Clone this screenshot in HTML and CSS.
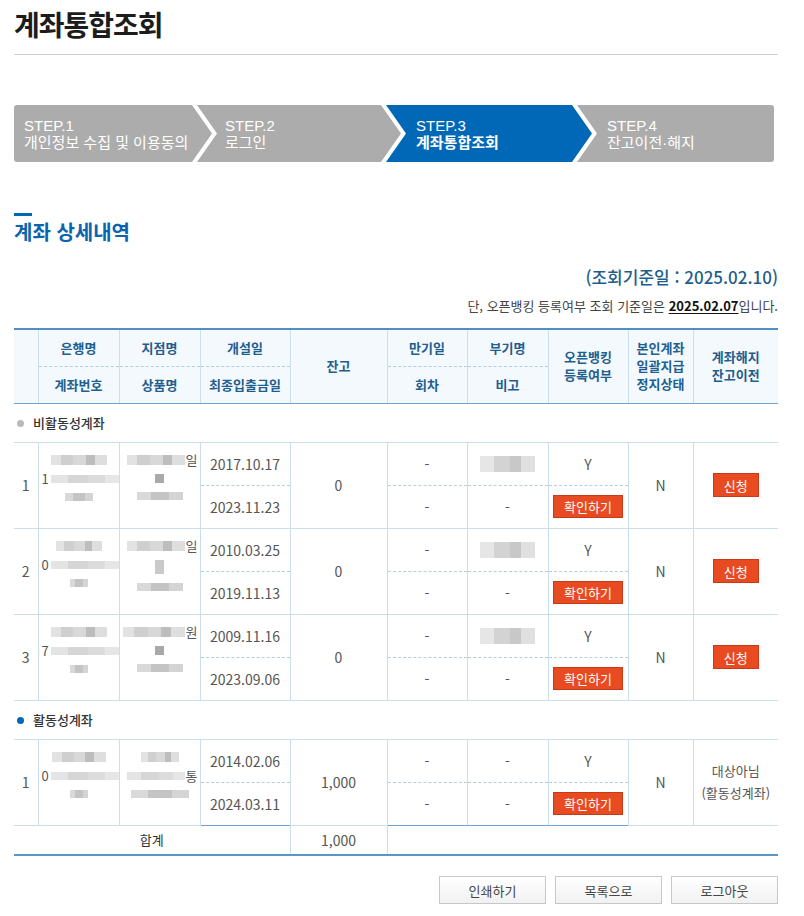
FILE: index.html
```html
<!DOCTYPE html>
<html lang="ko">
<head>
    <meta charset="UTF-8">
    <meta name="viewport" content="width=device-width, initial-scale=1.0">
    <title>계좌통합조회</title>
    <link rel="stylesheet" href="styles.css">
</head>
<body>
    <div class="page">
        <h1 class="page-title">계좌통합조회</h1>

        <ol class="steps">
            <li class="step step-1"><span>STEP.1</span><span>개인정보 수집 및 이용동의</span></li>
            <li class="step step-2"><span>STEP.2</span><span>로그인</span></li>
            <li class="step step-3 on"><span>STEP.3</span><strong>계좌통합조회</strong></li>
            <li class="step step-4"><span>STEP.4</span><span>잔고이전·해지</span></li>
        </ol>

        <h2 class="sec-title">계좌 상세내역</h2>
        <p class="base-date">(조회기준일 : 2025.02.10)</p>
        <p class="base-note">단, 오픈뱅킹 등록여부 조회 기준일은 <u>2025.02.07</u>입니다.</p>

        <table class="acct-table">
            <colgroup>
                <col class="c-no">
                <col class="c-bank">
                <col class="c-branch">
                <col class="c-date">
                <col class="c-bal">
                <col class="c-due">
                <col class="c-memo">
                <col class="c-open">
                <col class="c-stop">
                <col class="c-close">
            </colgroup>
            <thead>
                <tr class="h-a">
                    <th rowspan="2" class="no-l full"></th>
                    <th class="dash">은행명</th>
                    <th class="dash">지점명</th>
                    <th class="dash">개설일</th>
                    <th rowspan="2" class="full">잔고</th>
                    <th class="dash">만기일</th>
                    <th class="dash">부기명</th>
                    <th rowspan="2" class="full">오픈뱅킹<br>등록여부</th>
                    <th rowspan="2" class="full">본인계좌<br>일괄지급<br>정지상태</th>
                    <th rowspan="2" class="full">계좌해지<br>잔고이전</th>
                </tr>
                <tr class="h-b">
                    <th class="full">계좌번호</th>
                    <th class="full">상품명</th>
                    <th class="full">최종입출금일</th>
                    <th class="full">회차</th>
                    <th class="full">비고</th>
                </tr>
            </thead>
            <tbody>
                <tr class="group">
                    <td colspan="10"><span class="dot"></span>비활동성계좌</td>
                </tr>

                <tr class="sub-a">
                    <td rowspan="2" class="no-l">1</td>
                    <td rowspan="2" class="mask-cell">
                        <div class="mask">
                            <i class="m m-top w56"></i>
                            <div class="m-line lead"><b>1</b><i class="m m-mid w70"></i></div>
                            <i class="m m-low w28"></i>
                        </div>
                    </td>
                    <td rowspan="2" class="mask-cell">
                        <div class="mask">
                            <div class="m-line tail"><i class="m m-top w58"></i><b>일</b></div>
                            <i class="m m-dot"></i>
                            <i class="m m-low w46"></i>
                        </div>
                    </td>
                    <td class="dash">2017.10.17</td>
                    <td rowspan="2">0</td>
                    <td class="dash">-</td>
                    <td class="dash"><i class="m m-memo"></i></td>
                    <td class="dash">Y</td>
                    <td rowspan="2">N</td>
                    <td rowspan="2"><button class="btn-red btn-apply">신청</button></td>
                </tr>
                <tr class="sub-b">
                    <td>2023.11.23</td>
                    <td>-</td>
                    <td>-</td>
                    <td><button class="btn-red btn-check">확인하기</button></td>
                </tr>

                <tr class="sub-a">
                    <td rowspan="2" class="no-l">2</td>
                    <td rowspan="2" class="mask-cell">
                        <div class="mask">
                            <i class="m m-top w46"></i>
                            <div class="m-line lead"><b>0</b><i class="m m-mid w70"></i></div>
                            <i class="m m-low w18"></i>
                        </div>
                    </td>
                    <td rowspan="2" class="mask-cell">
                        <div class="mask">
                            <div class="m-line tail"><i class="m m-top w58"></i><b>일</b></div>
                            <i class="m m-dot light"></i>
                            <i class="m m-low w46"></i>
                        </div>
                    </td>
                    <td class="dash">2010.03.25</td>
                    <td rowspan="2">0</td>
                    <td class="dash">-</td>
                    <td class="dash"><i class="m m-memo"></i></td>
                    <td class="dash">Y</td>
                    <td rowspan="2">N</td>
                    <td rowspan="2"><button class="btn-red btn-apply">신청</button></td>
                </tr>
                <tr class="sub-b">
                    <td>2019.11.13</td>
                    <td>-</td>
                    <td>-</td>
                    <td><button class="btn-red btn-check">확인하기</button></td>
                </tr>

                <tr class="sub-a">
                    <td rowspan="2" class="no-l">3</td>
                    <td rowspan="2" class="mask-cell">
                        <div class="mask">
                            <i class="m m-top w56"></i>
                            <div class="m-line lead"><b>7</b><i class="m m-mid w70"></i></div>
                            <i class="m m-low w18"></i>
                        </div>
                    </td>
                    <td rowspan="2" class="mask-cell">
                        <div class="mask">
                            <div class="m-line tail"><i class="m m-top w62"></i><b>원</b></div>
                            <i class="m m-dot"></i>
                            <i class="m m-low w46"></i>
                        </div>
                    </td>
                    <td class="dash">2009.11.16</td>
                    <td rowspan="2">0</td>
                    <td class="dash">-</td>
                    <td class="dash"><i class="m m-memo"></i></td>
                    <td class="dash">Y</td>
                    <td rowspan="2">N</td>
                    <td rowspan="2"><button class="btn-red btn-apply">신청</button></td>
                </tr>
                <tr class="sub-b">
                    <td>2023.09.06</td>
                    <td>-</td>
                    <td>-</td>
                    <td><button class="btn-red btn-check">확인하기</button></td>
                </tr>

                <tr class="group">
                    <td colspan="10"><span class="dot blue"></span>활동성계좌</td>
                </tr>

                <tr class="sub-a">
                    <td rowspan="2" class="no-l">1</td>
                    <td rowspan="2" class="mask-cell">
                        <div class="mask">
                            <i class="m m-top w54"></i>
                            <div class="m-line lead"><b>0</b><i class="m m-mid w70"></i></div>
                            <i class="m m-low w18"></i>
                        </div>
                    </td>
                    <td rowspan="2" class="mask-cell">
                        <div class="mask">
                            <i class="m m-top w38"></i>
                            <div class="m-line tail"><i class="m m-mid w58"></i><b>통</b></div>
                            <i class="m m-low w58"></i>
                        </div>
                    </td>
                    <td class="dash">2014.02.06</td>
                    <td rowspan="2">1,000</td>
                    <td class="dash">-</td>
                    <td class="dash">-</td>
                    <td class="dash">Y</td>
                    <td rowspan="2">N</td>
                    <td rowspan="2" class="not-target">대상아님<br>(활동성계좌)</td>
                </tr>
                <tr class="sub-b last">
                    <td>2024.03.11</td>
                    <td>-</td>
                    <td>-</td>
                    <td><button class="btn-red btn-check">확인하기</button></td>
                </tr>
            </tbody>
            <tfoot>
                <tr class="total">
                    <td colspan="4" class="no-l total-label">합계</td>
                    <td>1,000</td>
                    <td colspan="5"></td>
                </tr>
            </tfoot>
        </table>

        <div class="btn-area">
            <button class="btn-gray">인쇄하기</button>
            <button class="btn-gray">목록으로</button>
            <button class="btn-gray">로그아웃</button>
        </div>
    </div>
</body>
</html>
```

FILE: styles.css
```css
:root {
    --blue: #0068b7;
    --step-gray: #acacac;
    --line: #cbdeec;
    --line-dash: #b4cde2;
    --line-strong: #6fa3d1;
    --head-bg: #f3f9fd;
    --head-text: #1f5e8f;
    --red: #e84b21;
    --text: #555;
}

* {
    margin: 0;
    padding: 0;
    box-sizing: border-box;
}

body {
    font-family: "Noto Sans CJK KR", "Noto Sans", sans-serif;
    color: #333;
    background: #fff;
}

.page {
    padding: 0 26px 40px 14px;
}

.page-title {
    font-size: 28px;
    line-height: 40px;
    font-weight: 700;
    color: #1c1c1c;
    padding: 4px 0 10px;
    border-bottom: 1px solid #cfcfcf;
    letter-spacing: -1px;
}

/* steps */
.steps {
    list-style: none;
    display: flex;
    margin-top: 50px;
    width: 760px;
    height: 57px;
}

.step {
    display: flex;
    flex-direction: column;
    justify-content: center;
    height: 57px;
    margin-right: -15px;
    padding-left: 30px;
    background: var(--step-gray);
    color: #fff;
    font-family: "Liberation Sans", "Noto Sans CJK KR", sans-serif;
    font-size: 15px;
    line-height: 17px;
    clip-path: polygon(0 0, calc(100% - 20px) 0, 100% 50%, calc(100% - 20px) 100%, 0 100%, 20px 50%);
}

.step span,
.step strong {
    display: block;
}

.step-1 {
    width: 198px;
    padding-left: 10px;
    border-radius: 3px 0 0 3px;
    clip-path: polygon(0 0, calc(100% - 20px) 0, 100% 50%, calc(100% - 20px) 100%, 0 100%);
}

.step-2 {
    width: 204px;
    padding-left: 28px;
}

.step-3 {
    width: 206px;
}

.step-4 {
    flex: 1;
    margin-right: 0;
    border-radius: 0 3px 3px 0;
    clip-path: polygon(0 0, 100% 0, 100% 100%, 0 100%, 20px 50%);
}

.step.on {
    background: var(--blue);
}

.step strong {
    font-weight: 700;
}

/* section title */
.sec-title {
    margin-top: 51px;
    font-size: 20px;
    line-height: 24px;
    font-weight: 700;
    color: #0b64ad;
}

.sec-title::before {
    content: "";
    display: block;
    width: 18px;
    height: 3px;
    margin-bottom: 4px;
    background: var(--blue);
}

.base-date {
    margin-top: 22px;
    text-align: right;
    font-size: 17px;
    line-height: 22px;
    color: #1f5e8c;
    font-weight: 500;
}

.base-note {
    margin-top: 8px;
    text-align: right;
    font-size: 13px;
    line-height: 20px;
    color: #444;
}

.base-note u {
    font-weight: 700;
    color: #111;
    text-underline-offset: 2px;
}

/* table */
.acct-table {
    width: 100%;
    margin-top: 12px;
    border-collapse: collapse;
    table-layout: fixed;
    border-top: 2px solid #4f8fc6;
    border-bottom: 2px solid #5b96c8;
    font-size: 14px;
    color: var(--text);
    text-align: center;
}

.c-no { width: 24px; }
.c-bank { width: 81px; }
.c-branch { width: 81px; }
.c-date { width: 90px; }
.c-bal { width: 97px; }
.c-due { width: 80px; }
.c-memo { width: 81px; }
.c-open { width: 80px; }
.c-stop { width: 65px; }
.c-close { width: 85px; }

.acct-table th,
.acct-table td {
    border-left: 1px solid var(--line);
    padding: 0;
    font-weight: normal;
    vertical-align: middle;
}

.acct-table .no-l {
    border-left: 0;
}

.acct-table thead th {
    height: 37px;
    background: var(--head-bg);
    color: var(--head-text);
    font-weight: 700;
    font-size: 13px;
    line-height: 18px;
}

.acct-table thead th.dash {
    border-bottom: 1px dashed var(--line-dash);
}

.acct-table thead th.full {
    border-bottom: 1px solid var(--line-strong);
}

.acct-table .group td {
    height: 39px;
    border-left: 0;
    border-bottom: 1px solid var(--line);
    text-align: left;
    padding-left: 3px;
    color: #333;
    font-size: 13px;
    font-weight: 500;
}

.dot {
    display: inline-block;
    width: 7px;
    height: 7px;
    margin-right: 9px;
    border-radius: 50%;
    background: #b9b9b9;
    vertical-align: 1px;
}

.dot.blue {
    background: var(--blue);
}

.acct-table .sub-a td {
    height: 43px;
    border-bottom: 1px solid var(--line);
}

.acct-table .sub-a td.dash {
    border-bottom: 1px dashed var(--line-dash);
}

.acct-table .sub-b td {
    height: 42px;
    border-bottom: 1px solid var(--line);
}

.acct-table .sub-b.last td {
    border-bottom-color: var(--line-strong);
}

.acct-table .total td {
    height: 30px;
    border-top: 1px solid var(--line-strong);
}

.total-label {
    color: #333;
    font-size: 13px;
    font-weight: 500;
}

.not-target {
    font-size: 13px;
    line-height: 22px;
}

.btn-red {
    border: 1px solid #c73a17;
    background: var(--red);
    color: #fff;
    font-family: inherit;
    font-size: 13px;
    cursor: pointer;
}

.btn-check {
    width: 70px;
    height: 23px;
    line-height: 20px;
}

.btn-apply {
    width: 46px;
    height: 24px;
    line-height: 21px;
}

/* masked account info */
.mask-cell {
    overflow: hidden;
}

.mask {
    display: flex;
    flex-direction: column;
    align-items: center;
    height: 85px;
    padding-top: 12px;
    gap: 9px;
}

.m {
    display: block;
    height: 10px;
    filter: blur(0.6px);
}

.m-top {
    background: linear-gradient(90deg, #e2e2e2 0 18%, #cfcfcf 18% 40%, #d8d8d8 40% 62%, #bdbdbd 62% 78%, #dedede 78%);
}

.m-mid {
    height: 8px;
    background: linear-gradient(90deg, #e4e4e4 0 25%, #d6d6d6 25% 55%, #dcdcdc 55% 80%, #e6e6e6 80%);
}

.m-low {
    height: 8px;
    background: linear-gradient(90deg, #d9d9d9 0 30%, #c4c4c4 30% 70%, #d4d4d4 70%);
}

.m-dot {
    width: 9px;
    height: 9px;
    background: #a9a9a9;
}

.m-dot.light {
    background: #c9c9c9;
    height: 14px;
}

.m-memo {
    width: 55px;
    height: 16px;
    margin: 0 auto;
    background: linear-gradient(90deg, #e6e6e6 0 25%, #d3d3d3 25% 55%, #c8c8c8 55% 75%, #e0e0e0 75%);
}

.m-line {
    display: flex;
    align-items: center;
    align-self: stretch;
    height: 10px;
}

.m-line b {
    font-weight: normal;
    color: #555;
    font-size: 13px;
}

.m-line.lead {
    justify-content: flex-start;
    padding-left: 3px;
}

.m-line.lead b {
    margin-right: 2px;
}

.m-line.tail {
    justify-content: flex-end;
    padding-right: 2px;
}

.m-line.tail b {
    margin-left: 1px;
}

.w18 { width: 18px; }
.w28 { width: 28px; }
.w38 { width: 38px; }
.w46 { width: 46px; }
.w54 { width: 54px; }
.w56 { width: 56px; }
.w58 { width: 58px; }
.w62 { width: 62px; }
.w70 { width: 70px; }

/* bottom buttons */
.btn-area {
    display: flex;
    justify-content: flex-end;
    gap: 9px;
    margin-top: 20px;
}

.btn-gray {
    width: 107px;
    height: 28px;
    border: 1px solid #c8c8c8;
    background: linear-gradient(#ffffff, #f1f1f1);
    color: #444;
    font-family: inherit;
    font-size: 13px;
    cursor: pointer;
}
```
